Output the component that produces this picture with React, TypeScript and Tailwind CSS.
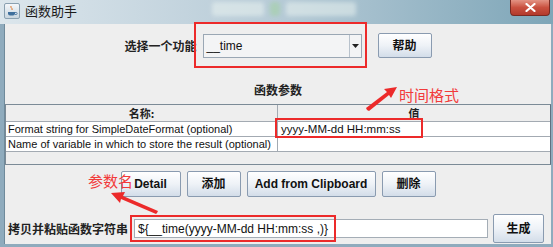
import React from 'react'

const latin = "font-['Liberation_Sans','Noto_Sans_CJK_SC',sans-serif]"
const cjk = "font-['Noto_Sans_CJK_SC','Liberation_Sans',sans-serif]"

function SwingButton({ label, width, height = 'h-[26px]' }: { label: string; width: string; height?: string }) {
  return (
    <button
      className={`${width} ${height} ${latin} flex items-center justify-center rounded-[2px] border border-[#8a9bb0] bg-gradient-to-b from-[#ffffff] via-[#eef2f7] to-[#d3dde9] text-[12px] font-bold text-[#111]`}
    >
      {label}
    </button>
  )
}

function JavaIcon() {
  return (
    <div className="flex h-[16px] w-[16px] items-center justify-center rounded-[2px] border border-[#8aa0b0] bg-gradient-to-b from-[#f4f7fa] to-[#c9d6df]">
      <svg width="12" height="12" viewBox="0 0 12 12">
        <path d="M5 1 C4 3 7 3 6 5" stroke="#e0772a" strokeWidth="1" fill="none" />
        <path d="M2 7 h7 v1.5 a2 2 0 0 1 -2 2 h-3 a2 2 0 0 1 -2 -2 z" fill="#3f6f9c" />
        <path d="M9 7.5 h1.2 a1 1 0 0 1 0 2 h-1.2" stroke="#3f6f9c" strokeWidth="0.8" fill="none" />
      </svg>
    </div>
  )
}

export default function App() {
  return (
    <div className="relative h-[247px] w-[553px] overflow-hidden bg-[#8fabbd]">
      {/* title bar, with the blurred glass behind it */}
      <div className="flex h-[24px] items-start bg-gradient-to-r from-[#dce6ec] via-[#b7cbd7] to-[#7ea6b8]">
        <div className="ml-[4px] mt-[3px]">
          <JavaIcon />
        </div>
        <span className={`${cjk} ml-[5px] mt-[2px] text-[13px] leading-[18px] text-[#1b1b1b]`}>函数助手</span>
        <div className="ml-[135px] mt-[2px] flex gap-[6px] opacity-50 blur-[2px]">
          <div className="h-[14px] w-[52px] rounded-[3px] bg-[#eef6f2]" />
          <div className="h-[14px] w-[10px] rounded-[3px] bg-[#9fd29a]" />
          <div className="h-[14px] w-[70px] rounded-[3px] bg-[#eef6f2]" />
        </div>
        <div className="ml-auto mr-[3px] flex h-[16px] w-[40px] items-center justify-center rounded-b-[4px] border border-t-0 border-[#7a2a22] bg-gradient-to-b from-[#e39384] via-[#c9503f] to-[#b33a2c]">
          <svg width="11" height="9" viewBox="0 0 11 9">
            <path d="M1.5 1 L9.5 8 M9.5 1 L1.5 8" stroke="#ffffff" strokeWidth="2.2" strokeLinecap="round" />
          </svg>
        </div>
      </div>

      {/* content */}
      <div className="ml-[4px] mr-[2px] flex h-[220px] flex-col border-l border-[#6f8a9b] bg-[#eeeeee]">
        <div className="mt-[9px] flex h-[25px] items-center justify-center">
          <span className={`${cjk} mr-[6px] text-[12px] font-bold text-[#222]`}>选择一个功能</span>
          <div className="flex h-[24px] w-[159px] items-center border border-[#9aa7b4] bg-[#f3f4f5]">
            <span className={`${latin} ml-[3px] flex-1 text-[12px] text-[#111]`}>__time</span>
            <div className="flex h-full w-[12px] items-center justify-center border-l border-[#b8c2cc]">
              <svg width="7" height="4" viewBox="0 0 7 4">
                <path d="M0 0 H7 L3.5 4 Z" fill="#222" />
              </svg>
            </div>
          </div>
          <div className="ml-[16px]">
            <SwingButton label="帮助" width="w-[54px]" height="h-[25px]" />
          </div>
        </div>

        <div className={`${cjk} mt-[25px] h-[14px] text-center text-[12px] font-bold leading-[14px] text-[#222]`}>
          函数参数
        </div>

        <div className="mt-[7px] w-[546px] border border-[#7b8a96] border-r-[#5f7080]">
          <div className="flex h-[17px] border-b border-[#a3aab2] bg-[#eeeeee]">
            <div className={`${cjk} flex w-[272px] items-center justify-center border-r border-[#a3aab2] text-[11px] font-bold text-[#222]`}>
              名称:
            </div>
            <div className={`${cjk} flex flex-1 items-center justify-center text-[11px] font-bold text-[#222]`}>值</div>
          </div>
          <div className="flex h-[15px] border-b border-[#a3aab2] bg-white">
            <div className={`${latin} w-[272px] overflow-hidden whitespace-nowrap border-r border-[#a3aab2] pl-[2px] text-[11px] leading-[14px] text-[#111]`}>
              Format string for SimpleDateFormat (optional)
            </div>
            <div className={`${latin} flex-1 whitespace-nowrap pl-[3px] text-[11.5px] leading-[14px] text-[#111]`}>yyyy-MM-dd HH:mm:ss</div>
          </div>
          <div className="flex h-[15px] border-b border-[#a3aab2] bg-white">
            <div className={`${latin} w-[272px] overflow-hidden whitespace-nowrap border-r border-[#a3aab2] pl-[2px] text-[11px] leading-[14px] text-[#111]`}>
              Name of variable in which to store the result (optional)
            </div>
            <div className="flex-1" />
          </div>
          <div className="h-[12px] bg-[#eeeeee]" />
        </div>

        <div className="mt-[6px] flex h-[26px] justify-center gap-[6px]">
          <SwingButton label="Detail" width="w-[60px]" />
          <SwingButton label="添加" width="w-[54px]" />
          <SwingButton label="Add from Clipboard" width="w-[129px]" />
          <SwingButton label="删除" width="w-[54px]" />
        </div>

        <div className="mt-[17px] flex h-[29px] items-center">
          <span className={`${cjk} ml-[3px] w-[121px] whitespace-nowrap text-[12px] font-bold text-[#222]`}>拷贝并粘贴函数字符串</span>
          <div className={`${latin} ml-[5px] flex h-[19px] w-[354px] items-center border border-[#a4adb6] bg-white pl-[3px] text-[12px] text-[#111]`}>
            {'${__time(yyyy-MM-dd HH:mm:ss ,)}'}
          </div>
          <div className="ml-[5px]">
            <SwingButton label="生成" width="w-[51px]" height="h-[29px]" />
          </div>
        </div>
      </div>

      {/* annotations */}
      <div className="absolute left-[194px] top-[22px] h-[46px] w-[173px] border-2 border-[#ec2a2a]" />
      <div className="absolute left-[275px] top-[118px] h-[20px] w-[148px] border-2 border-[#ec2a2a]" />
      <div className="absolute left-[130px] top-[215px] h-[27px] w-[206px] border-2 border-[#ec2a2a]" />
      <span className={`${cjk} absolute left-[399px] top-[85px] text-[15px] leading-[20px] text-[#f23a3a]`}>时间格式</span>
      <span className={`${cjk} absolute left-[88px] top-[171px] text-[15px] leading-[20px] text-[#f23a3a]`}>参数名</span>
      <svg className="absolute left-0 top-0" width="553" height="247" viewBox="0 0 553 247">
        <path d="M367 110 L366 108 L387 92 L384 89 L397 87 L391 98 L389 95 L369 111 Z" fill="#ec2a2a" />
        <path d="M157 213 L158 211 L123 196 L125 192 L111 193 L120 203 L121 199 L156 214 Z" fill="#ec2a2a" />
      </svg>
    </div>
  )
}
